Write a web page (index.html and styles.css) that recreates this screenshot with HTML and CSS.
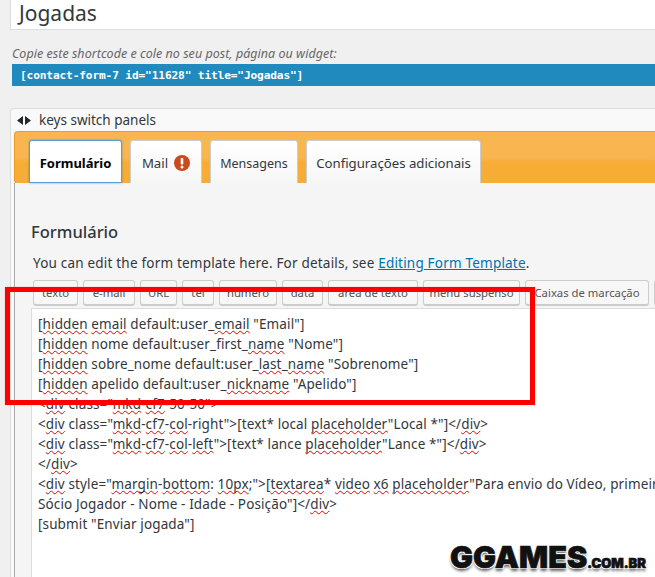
FILE: index.html
```html
<!DOCTYPE html>
<html lang="pt">
<head>
<meta charset="utf-8">
<title>Jogadas</title>
<link rel="stylesheet" href="styles.css">
</head>
<body>
<main class="page">
  <div class="title-box">Jogadas</div>
  <p class="hint">Copie este shortcode e cole no seu post, página ou widget:</p>
  <div class="shortcode">[contact-form-7 id="11628" title="Jogadas"]</div>
  <section class="panels">
    <div class="keys"><span class="arrows"><svg width="14" height="9" viewBox="0 0 14 9"><path d="M6 0v9L0 4.500zM8 0v9l6-4.500z" fill="#23282d"/></svg></span>keys switch panels</div>
    <nav class="tabs">
      <span class="tab tab-active">Formulário</span>
      <span class="tab tab-mail">Mail <svg class="alert" width="16" height="16" viewBox="0 0 16 16"><circle cx="8" cy="8" r="8" fill="#ca4a1f"/><rect x="6.700" y="3" width="2.600" height="6.500" rx=".8" fill="#fff"/><circle cx="8" cy="12" r="1.500" fill="#fff"/></svg></span>
      <span class="tab tab-msg">Mensagens</span>
      <span class="tab tab-cfg">Configurações adicionais</span>
    </nav>
    <div class="panel">
      <h2 class="panel-title">Formulário</h2>
      <p class="panel-text">You can edit the form template here. For details, see <a href="#">Editing Form Template</a>.</p>
      <div class="tools">
        <span class="tool w45">texto</span><span class="tool w52">e-mail</span><span class="tool w37">URL</span><span class="tool w32">tel</span><span class="tool w58">número</span><span class="tool w41">data</span><span class="tool w90">área de texto</span><span class="tool w97">menu suspenso</span><span class="tool w124">Caixas de marcação</span><span class="tool w60"></span>
      </div>
      <div class="editor">
        <div class="line">[<u>hidden</u> <u>email</u> default:user_<u>email</u> "Email"]</div>
        <div class="line">[<u>hidden</u> nome default:user_first_<u>name</u> "Nome"]</div>
        <div class="line">[<u>hidden</u> sobre_nome default:user_<u>last</u>_<u>name</u> "Sobrenome"]</div>
        <div class="line">[<u>hidden</u> apelido default:user_<u>nickname</u> "Apelido"]</div>
        <div class="line">&lt;<u>div</u> class="<u>mkd</u>-<u>cf7</u>-50-50"&gt;</div>
        <div class="line">&lt;<u>div</u> class="<u>mkd</u>-<u>cf7</u>-<u>col</u>-right"&gt;[text* local <u>placeholder</u>"Local *"]&lt;/<u>div</u>&gt;</div>
        <div class="line">&lt;<u>div</u> class="<u>mkd</u>-<u>cf7</u>-<u>col</u>-<u>left</u>"&gt;[text* lance <u>placeholder</u>"Lance *"]&lt;/<u>div</u>&gt;</div>
        <div class="line">&lt;/<u>div</u>&gt;</div>
        <div class="line">&lt;<u>div</u> style="<u>margin</u>-<u>bottom</u>: <u>10px</u>;"&gt;[<u>textarea</u>* <u>video</u> <u>x6</u> <u>placeholder</u>"Para envio do Vídeo, primeir</div>
        <div class="line">Sócio Jogador - Nome - Idade - Posição"]&lt;/<u>div</u>&gt;</div>
        <div class="line">[submit "Enviar jogada"]</div>
      </div>
    </div>
  </section>
  <div class="highlight"></div>
  <div class="brand">GGAMES<small>.COM.BR</small></div>
</main>
</body>
</html>
```
FILE: styles.css
```css
* { box-sizing: border-box; }
html, body { margin: 0; height: 100%; overflow: hidden; }
body { background: #f0f0f0; color: #32373c; font-family: "Noto Sans", sans-serif; }
.page { position: relative; width: 655px; height: 577px; overflow: hidden; padding-left: 10px; }
.title-box { height: 30px; background: #fff; border: 1px solid #ddd; border-top: 0; border-right: 0; padding-left: 8px; font-size: 21px; line-height: 27px; color: #32373c; }
.hint { margin: 15px 0 0 2px; height: 18px; font-size: 12.500px; line-height: 18px; font-style: italic; color: #666; letter-spacing: .03px; }
.shortcode { margin: 1px 0 0 2px; height: 22px; background: #208abe; color: #fff; padding-left: 8px; font: bold 11.200px/23px "DejaVu Sans Mono", monospace; letter-spacing: -.15px; }
.panels { margin-top: 22px; height: 471px; background: #f9f9f9; border: 1px solid #ddd; border-right: 0; border-bottom: 0; border-radius: 4px 0 0 0; padding: 0 0 0 3px; }
.keys { height: 22px; display: flex; align-items: center; gap: 8px; font-size: 13.500px; padding-left: 3px; color: #32373c; }
.arrows { display: flex; }
.tabs { height: 53px; display: flex; align-items: flex-end; gap: 8px; padding-left: 14px; background: linear-gradient(#f9b650 0 50%, #f7ac35 60%); border: 1px solid #ee9a25; border-bottom: 1px solid #aaa; border-right: 0; border-radius: 4px 0 0 4px; }
.tab { height: 43px; padding-top: 2px; display: flex; align-items: center; justify-content: center; gap: 6px; font-size: 13.200px; color: #32373c; background: linear-gradient(#fff, #f6f6f6); border: 1px solid #ccc; border-bottom: 0; border-radius: 3px 3px 0 0; }
.tab-active { width: 93px; color: #000; font-weight: 700; font-size: 13px; background: #fff; border: 1px solid #5b9dd9; box-shadow: 0 0 2px rgba(30,140,190,.8); }
.tab-mail { width: 72px; }
.tab-msg { width: 88px; font-size: 12.500px; }
.tab-cfg { width: 175px; }
.alert { flex: none; }
.panel { margin-top: -1px; height: 395px; background: #f5f5f5; border-left: 1px solid #aaa; padding: 37px 0 0 16px; }
.panel-title { margin: 0; height: 23px; font-size: 16.500px; line-height: 23px; font-weight: 500; color: #32373c; }
.panel-text { margin: 9px 0 0 2px; height: 22px; font-size: 13.500px; line-height: 22px; white-space: nowrap; letter-spacing: .2px; }
.panel-text a { color: #0073aa; }
.tools { margin-top: 6px; height: 26px; display: flex; gap: 5px; padding-left: 2px; }
.tool { flex: none; height: 26px; display: flex; align-items: center; justify-content: center; font-size: 11.300px; color: #555; background: #f7f7f7; border: 1px solid #ccc; border-bottom-width: 2px; border-radius: 3px; }
.w45 { width: 45px; } .w52 { width: 52px; } .w37 { width: 37px; } .w32 { width: 32px; } .w58 { width: 58px; } .w41 { width: 41px; } .w90 { width: 90px; } .w97 { width: 97px; } .w124 { width: 124px; } .w60 { width: 60px; }
.editor { margin-top: 2px; height: 270px; background: #fff; border: 1px solid #ddd; border-right: 0; padding: 5px 0 0 6px; font-size: 13.500px; line-height: 20px; letter-spacing: .12px; white-space: nowrap; overflow: hidden; }
.line { height: 20px; }
.editor u { text-decoration: underline wavy #e00; text-decoration-thickness: 1px; text-underline-offset: 1px; text-decoration-skip-ink: none; }
.highlight { position: absolute; left: 5px; top: 287px; width: 530px; height: 118px; border: 5px solid #f00; box-shadow: 0 0 1px #f88; }
.brand { position: absolute; left: 450px; top: 539px; font: 900 30.500px/36px "Inter", sans-serif; color: #111; -webkit-text-stroke: .7px #111; text-shadow: 1px 1px 0 #fff, -1px -1px 0 #fff, 1px -1px 0 #fff, -1px 1px 0 #fff, 0 3px 3px rgba(0,0,0,.6); white-space: nowrap; }
.brand small { font-size: 13px; font-weight: 900; }
```
